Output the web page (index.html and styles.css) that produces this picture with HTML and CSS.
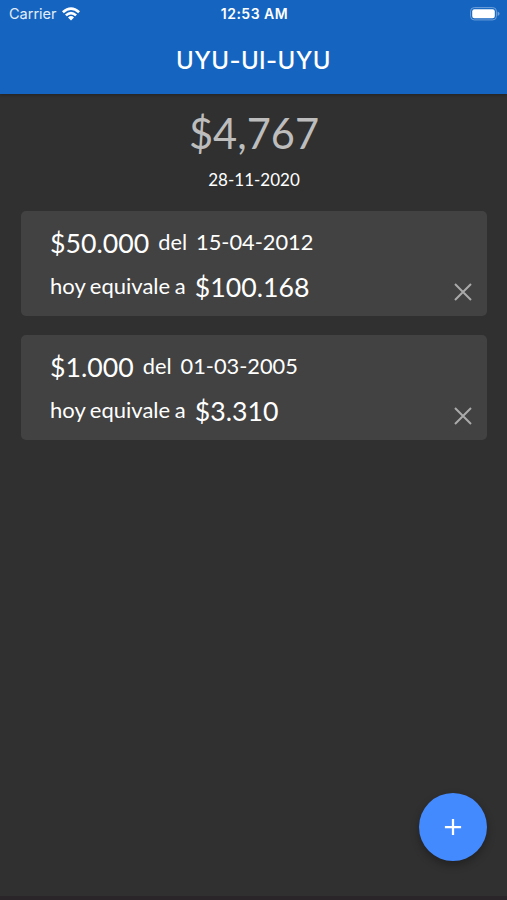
FILE: index.html
```html
<!DOCTYPE html>
<html lang="es">
<head>
<meta charset="utf-8">
<title>UYU-UI-UYU</title>
<link rel="stylesheet" href="styles.css">
</head>
<body>
<div class="screen">
  <header class="header">
    <div class="status">
      <div class="carrier">
        <span>Carrier</span>
        <svg class="wifi" viewBox="0 0 18 14"><path fill="#fff" d="M0 4.3Q9-3.8 18 4.3L16.2 6.2Q9-.3 1.8 6.2ZM3 7.4Q9 1.9 15 7.4L13.2 9.2Q9 5.6 4.8 9.2ZM6 10.4Q9 7.7 12 10.4L9 13.4Z"/></svg>
      </div>
      <span class="time">12:53 AM</span>
      <svg class="battery" viewBox="0 0 30 14"><rect x=".6" y=".6" width="25.8" height="12.3" rx="3.6" fill="none" stroke="#6fa0d9"/><rect x="2.2" y="2.2" width="22.6" height="9.1" rx="2.2" fill="#fff"/><path fill="#6fa0d9" d="M27.6 4.6q2 .7 2 2.2t-2 2.2z"/></svg>
    </div>
    <h1 class="title">UYU-UI-UYU</h1>
  </header>
  <main class="main">
    <div class="rate">$4,767</div>
    <div class="date">28-11-2020</div>
    <section class="card">
      <p class="line"><span class="amount">$50.000</span><span>del</span><span>15-04-2012</span></p>
      <p class="line"><span class="phrase">hoy equivale a</span><span class="amount">$100.168</span></p>
      <button class="close" aria-label="Eliminar"><svg viewBox="0 0 18 18"><path d="M1 1l16 16m0-16l-16 16"/></svg></button>
    </section>
    <section class="card">
      <p class="line"><span class="amount">$1.000</span><span>del</span><span>01-03-2005</span></p>
      <p class="line"><span class="phrase">hoy equivale a</span><span class="amount">$3.310</span></p>
      <button class="close" aria-label="Eliminar"><svg viewBox="0 0 18 18"><path d="M1 1l16 16m0-16l-16 16"/></svg></button>
    </section>
  </main>
  <button class="fab" aria-label="Agregar"><svg viewBox="0 0 20 20"><path d="M10 1v18M1 10h18"/></svg></button>
</div>
</body>
</html>
```
FILE: styles.css
```css
* { box-sizing: border-box; }
body { margin: 0; background: #303030; }
.screen { position: relative; height: 900px; overflow: hidden; background: #303030; color: #fff; font-family: Lato, sans-serif; border-bottom: 4px solid #292529; }
.header { height: 94px; background: #1565c0; box-shadow: 0 1px 3px rgba(0,0,0,.3); }
.status { height: 27px; padding: 0 7px 0 9px; display: grid; grid-template-columns: 1fr auto 1fr; align-items: center; font: 14.5px/27px Inter, sans-serif; }
.carrier { display: flex; align-items: center; gap: 5px; }
.carrier span { color: #e3edf8; }
.wifi { width: 18px; height: 14px; }
.time { font-size: 14px; font-weight: 600; letter-spacing: .5px; }
.battery { width: 30px; height: 14px; justify-self: end; }
.title { margin: 17px 0 0; font: 500 24px/34px Inter, sans-serif; letter-spacing: .4px; text-align: center; }
.main { padding: 11px 20px 0 21px; }
.rate { height: 55px; font-size: 41.6px; line-height: 56px; text-align: center; color: #bdbdbd; }
.date { height: 51px; padding-top: 8px; font-size: 17px; line-height: 24px; text-align: center; }
.card { position: relative; height: 105px; margin-bottom: 19.4px; padding: 10px 29px; background: #424242; border-radius: 5px; }
.line { display: flex; align-items: center; gap: 9px; height: 44px; margin: 0; font-size: 21.8px; line-height: 40px; white-space: nowrap; }
.line span { padding-bottom: 3px; }
.line .phrase { font-size: 22px; word-spacing: -1px; }
.line .amount { padding-bottom: 0; font-size: 26.7px; }
.close { position: absolute; right: 15px; bottom: 15.5px; width: 18px; height: 18px; padding: 0; border: 0; background: none; }
.close svg, .fab svg { display: block; width: 100%; height: 100%; fill: none; stroke: #aaa; stroke-width: 2; }
.fab { position: absolute; right: 20px; top: 793px; width: 68px; height: 68px; padding: 25px; border: 0; border-radius: 50%; background: #448aff; box-shadow: 0 4px 8px rgba(0,0,0,.3); }
.fab svg { stroke: #fff; stroke-width: 2.5; }
```
